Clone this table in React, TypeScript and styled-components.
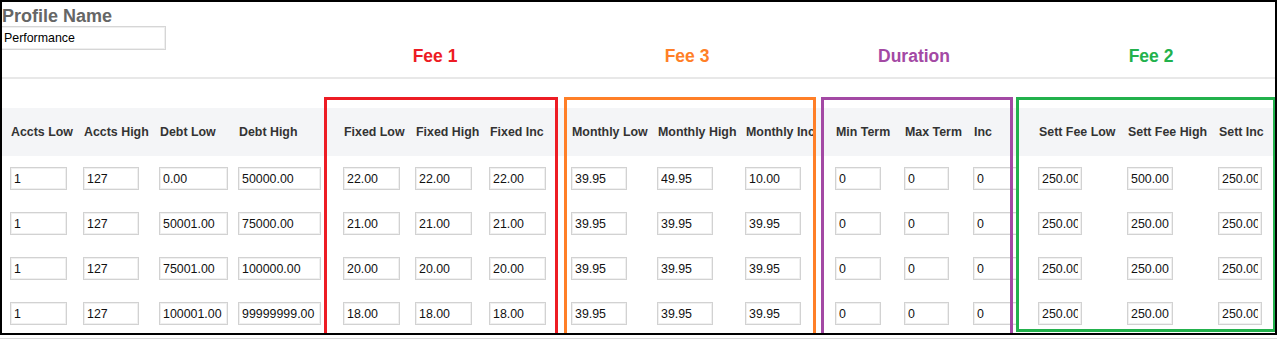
import React from "react";
import styled, { createGlobalStyle } from "styled-components";

interface Column {
  label: string;
  width: number; // input width
}

interface Group {
  label: string;
  color: string;
  left: number;
  width: number;
  shift: number;
  closed?: boolean;
}

const COLUMNS: Column[] = [
  { label: "Accts Low", width: 57 },
  { label: "Accts High", width: 56 },
  { label: "Debt Low", width: 69 },
  { label: "Debt High", width: 83 },
  { label: "Fixed Low", width: 57 },
  { label: "Fixed High", width: 57 },
  { label: "Fixed Inc", width: 57 },
  { label: "Monthly Low", width: 56 },
  { label: "Monthly High", width: 56 },
  { label: "Monthly Inc", width: 56 },
  { label: "Min Term", width: 46 },
  { label: "Max Term", width: 45 },
  { label: "Inc", width: 45 },
  { label: "Sett Fee Low", width: 44 },
  { label: "Sett Fee High", width: 46 },
  { label: "Sett Inc", width: 44 },
];

const ROWS: string[][] = [
  ["1", "127", "0.00", "50000.00", "22.00", "22.00", "22.00", "39.95", "49.95", "10.00", "0", "0", "0", "250.00", "500.00", "250.00"],
  ["1", "127", "50001.00", "75000.00", "21.00", "21.00", "21.00", "39.95", "39.95", "39.95", "0", "0", "0", "250.00", "250.00", "250.00"],
  ["1", "127", "75001.00", "100000.00", "20.00", "20.00", "20.00", "39.95", "39.95", "39.95", "0", "0", "0", "250.00", "250.00", "250.00"],
  ["1", "127", "100001.00", "99999999.00", "18.00", "18.00", "18.00", "39.95", "39.95", "39.95", "0", "0", "0", "250.00", "250.00", "250.00"],
];

// highlight boxes drawn over the grid (frame-relative)
const GROUPS: Group[] = [
  { label: "Fee 1", color: "#ed1c24", left: 322, width: 234, shift: -6 },
  { label: "Fee 3", color: "#ff7f27", left: 562, width: 252, shift: -3 },
  { label: "Duration", color: "#a349a4", left: 819, width: 192, shift: -3 },
  { label: "Fee 2", color: "#22b14c", left: 1014, width: 260, shift: 5, closed: true },
];

const GRID_COLUMNS =
  "73px 76px 79px 105px 72px 74px 82px 86px 88px 90px 69px 69px 65px 89px 91px 1fr";

export default function App(): JSX.Element {
  return (
    <>
      <GlobalStyle />
      <Frame>
        <TopSection>
          <ProfileLabel>Profile Name</ProfileLabel>
          <ProfileInput defaultValue="Performance" />
        </TopSection>

        <Table>
          <Row $head>
            {COLUMNS.map((c) => (
              <HeadCell key={c.label}>{c.label}</HeadCell>
            ))}
          </Row>
          {ROWS.map((row, i) => (
            <Row key={i}>
              {row.map((value, j) => (
                <div key={j}>
                  <Field $w={COLUMNS[j].width} defaultValue={value} />
                </div>
              ))}
            </Row>
          ))}
        </Table>

        {GROUPS.map((g) => (
          <Annotation
            key={g.label}
            $left={g.left}
            $width={g.width}
            $closed={g.closed}
          >
            <GroupLabel $color={g.color} $shift={g.shift}>
              {g.label}
            </GroupLabel>
            <GroupBox $color={g.color} $closed={g.closed} />
          </Annotation>
        ))}
      </Frame>
      <BottomRule />
    </>
  );
}

const GlobalStyle = createGlobalStyle`
  html, body {
    margin: 0;
    padding: 0;
    background: #fff;
  }
  body {
    font-family: "Liberation Sans", Arial, sans-serif;
  }
`;

const Frame = styled.div`
  position: relative;
  box-sizing: border-box;
  width: 1277px;
  height: 335px;
  border: 2px solid #000;
  overflow: hidden;
  background: #fff;
`;

const TopSection = styled.section`
  box-sizing: border-box;
  height: 77px;
  padding-top: 4px;
  border-bottom: 2px solid #e8e8e8;
`;

const ProfileLabel = styled.h2`
  margin: 0;
  font-size: 18px;
  line-height: 20px;
  font-weight: 700;
  color: #666;
`;

const ProfileInput = styled.input`
  display: block;
  box-sizing: border-box;
  width: 166px;
  height: 24px;
  margin-left: -2px;
  padding: 0 1px 0 3px;
  border: 1px solid #d6d6d6;
  box-shadow: inset 0 0 0 1px #efefef;
  font-family: "Liberation Sans", Arial, sans-serif;
  font-size: 12.4px;
  color: #000;
  outline: none;
`;

const Table = styled.div`
  margin-top: 29px;
`;

const Row = styled.div<{ $head?: boolean }>`
  display: grid;
  grid-template-columns: ${GRID_COLUMNS};
  align-items: center;
  padding-left: 8px;
  height: ${(p) => (p.$head ? 48 : 45)}px;
  background: ${(p) => (p.$head ? "#f4f5f7" : "transparent")};
`;

const HeadCell = styled.div`
  padding-left: 1px;
  font-size: 12.4px;
  font-weight: 700;
  color: #333;
  white-space: nowrap;
`;

const Field = styled.input<{ $w: number }>`
  display: block;
  box-sizing: border-box;
  width: ${(p) => p.$w}px;
  height: 23px;
  padding: 0 3px;
  border: 1px solid #d2d2d2;
  box-shadow: inset 0 0 0 1px #f0f0f0;
  border-radius: 0;
  background: #fff;
  font-family: "Liberation Sans", Arial, sans-serif;
  font-size: 12.4px;
  color: #111;
  outline: none;
`;

const Annotation = styled.div<{ $left: number; $width: number; $closed?: boolean }>`
  position: absolute;
  top: 44px;
  bottom: ${(p) => (p.$closed ? 1 : -10)}px;
  left: ${(p) => p.$left}px;
  width: ${(p) => p.$width}px;
  display: flex;
  flex-direction: column;
  pointer-events: none;
`;

const GroupLabel = styled.div<{ $color: string; $shift: number }>`
  height: 20px;
  line-height: 20px;
  text-align: center;
  font-size: 17.5px;
  font-weight: 700;
  color: ${(p) => p.$color};
  white-space: nowrap;
  transform: translateX(${(p) => p.$shift}px);
`;

const GroupBox = styled.div<{ $color: string; $closed?: boolean }>`
  flex: 1;
  margin-top: 31px;
  border: 3px solid ${(p) => p.$color};
  border-bottom-width: ${(p) => (p.$closed ? 3 : 0)}px;
`;

const BottomRule = styled.div`
  width: 1277px;
  height: 1px;
  margin-top: 3px;
  background: #d8d8d8;
`;
